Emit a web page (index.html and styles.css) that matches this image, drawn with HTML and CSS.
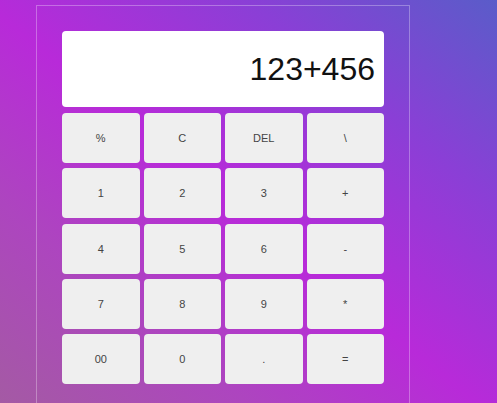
FILE: index.html
```html
<!DOCTYPE html>
<html>
<head>
<meta charset="utf-8">
<link rel="stylesheet" href="styles.css">
</head>
<body>
<div class="calc">
  <div class="display">123+456</div>
  <div class="keys">
    <button class="key">%</button>
    <button class="key">C</button>
    <button class="key">DEL</button>
    <button class="key">\</button>
    <button class="key">1</button>
    <button class="key">2</button>
    <button class="key">3</button>
    <button class="key">+</button>
    <button class="key">4</button>
    <button class="key">5</button>
    <button class="key">6</button>
    <button class="key">-</button>
    <button class="key">7</button>
    <button class="key">8</button>
    <button class="key">9</button>
    <button class="key">*</button>
    <button class="key">00</button>
    <button class="key">0</button>
    <button class="key">.</button>
    <button class="key">=</button>
  </div>
</div>
</body>
</html>
```
FILE: styles.css
```css
html, body {
  margin: 0;
  padding: 0;
  height: 403px;
  overflow: hidden;
}
body {
  background: linear-gradient(to bottom left, #5a5cc9 0%, #8a3fd6 25%, #b82ad9 52%, #ad45bf 75%, #a45aa4 100%);
  font-family: "Liberation Sans", Arial, sans-serif;
  padding-top: 5px;
  box-sizing: border-box;
}
.calc {
  margin-left: 36px;
  width: 322px;
  height: 420px;
  padding: 25px;
  border: 1px solid rgba(255, 255, 255, 0.3);
}
.display {
  height: 76px;
  background: #fff;
  border-radius: 4px;
  box-sizing: border-box;
  padding-right: 9px;
  display: flex;
  align-items: center;
  justify-content: flex-end;
  font-size: 32px;
  color: #111;
}
.keys {
  margin-top: 6px;
  display: grid;
  grid-template-columns: repeat(4, 1fr);
  grid-auto-rows: 50px;
  gap: 5.25px 4px;
}
.key {
  border: none;
  border-radius: 4px;
  background: #efefef;
  color: #444;
  font-family: "Liberation Sans", Arial, sans-serif;
  font-size: 11px;
  padding: 0;
}
```
